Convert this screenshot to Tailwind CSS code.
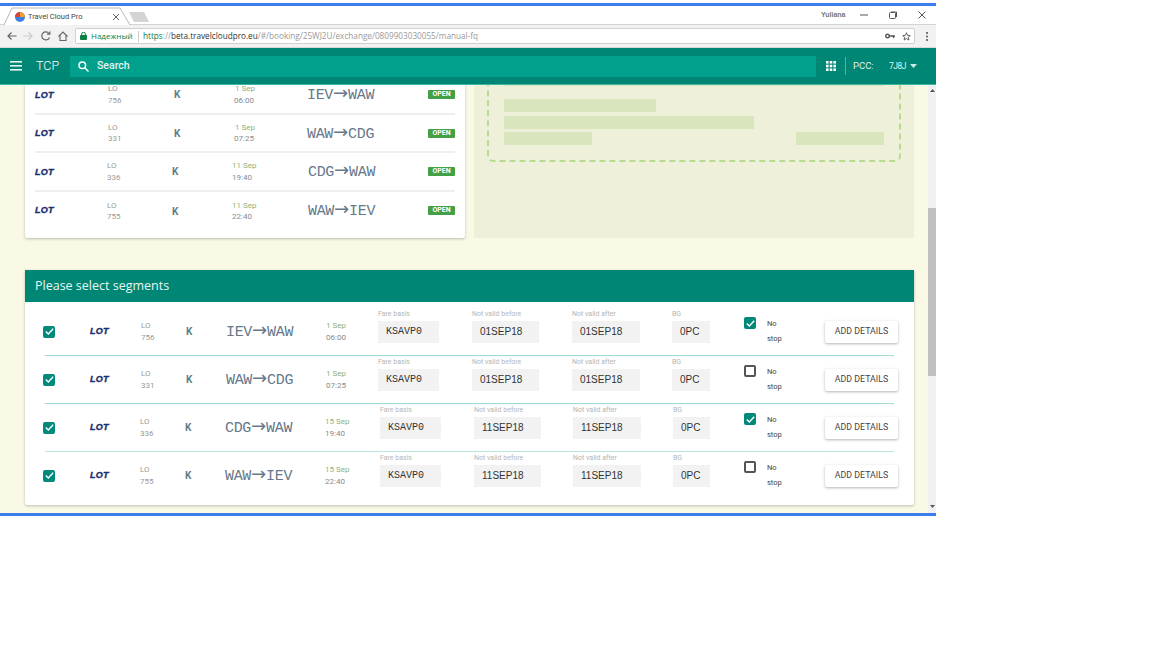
<!DOCTYPE html>
<html lang="en">
<head>
    <meta charset="UTF-8">
    <title>Travel Cloud Pro</title>
    <script src="https://cdn.jsdelivr.net/npm/@tailwindcss/browser@4"></script>
</head>
<body class="bg-white overflow-hidden font-['Roboto',sans-serif]">
<div class="w-[936px] h-[507px] mt-[3px] border-y-[3px] border-[#3b7de9] flex flex-col overflow-hidden box-content">

    <!-- browser tabs -->
    <div class="relative h-[19px] shrink-0 bg-white border-b border-[#d4d4d4] flex justify-end items-center pr-[10px] gap-[21px]">
        <svg class="absolute left-0 top-0" width="150" height="19" viewBox="0 0 150 19">
            <path d="M4 19 L12 2 H120 L130 19" fill="#fff" stroke="#b8b8b8"/>
            <path d="M129 6 H144 L149 16 H134 Z" fill="#d4d4d4"/>
            <circle cx="20" cy="11" r="5" fill="#3f7fe0"/>
            <path d="M20 6 A5 5 0 0 1 25 11 H20 Z" fill="#f0a030"/>
            <path d="M15 11 A5 5 0 0 1 20 6 V11 Z" fill="#d9453a"/>
            <path d="M113 8 L119 14 M119 8 L113 14" stroke="#666" stroke-width="1"/>
        </svg>
        <span class="absolute left-[28px] top-[5px] text-[7.5px] leading-[12px] text-[#444]">Travel Cloud Pro</span>
        <span class="text-[7px] font-bold text-[#777] w-[24px] -mr-[6px] font-['Liberation_Sans',sans-serif]">Yuliana</span>
        <svg width="8" height="8" viewBox="0 0 8 8"><path d="M0 4 H8" stroke="#555"/></svg>
        <svg width="8" height="8" viewBox="0 0 8 8" fill="none" stroke="#555"><rect x="0.5" y="1.5" width="6" height="6" rx="1"/><path d="M2 1 H7.5 V6"/></svg>
        <svg width="8" height="8" viewBox="0 0 8 8"><path d="M0.5 0.5 L7.5 7.5 M7.5 0.5 L0.5 7.5" stroke="#555"/></svg>
    </div>

    <!-- browser toolbar -->
    <div class="h-[23px] shrink-0 bg-[#f2f2f2] flex items-center pl-[7px] border-b border-[#d8d8d8]">
        <svg class="w-[10px] h-[10px] mr-[6px]" viewBox="0 0 10 10" fill="none" stroke="#666" stroke-width="1.2"><path d="M9.5 5 H1 M4.5 1.5 L1 5 L4.5 8.5"/></svg>
        <svg class="w-[10px] h-[10px] mr-[8px]" viewBox="0 0 10 10" fill="none" stroke="#ccc" stroke-width="1.2"><path d="M0.5 5 H9 M5.5 1.5 L9 5 L5.5 8.5"/></svg>
        <svg class="w-[10px] h-[10px] mr-[7px]" viewBox="0 0 10 10" fill="none" stroke="#666" stroke-width="1.2"><path d="M8.5 6.5 A4 4 0 1 1 8 2.5"/><path d="M8.8 0.5 V3.2 H6" /></svg>
        <svg class="w-[10px] h-[10px] mr-[7px]" viewBox="0 0 10 10" fill="none" stroke="#666" stroke-width="1.1"><path d="M0.5 5.5 L5 1 L9.5 5.5 M2 4.5 V9.5 H8 V4.5"/></svg>
        <div class="w-[840px] h-[16px] bg-white border border-[#d0d0d0] rounded-[2px] flex items-center pl-[4px] pr-[1px] leading-[14px] text-[8.2px] font-['Open_Sans',sans-serif] whitespace-nowrap">
            <svg class="w-[7px] h-[8px] mr-[4px] shrink-0" viewBox="0 0 7 8"><rect y="3" width="7" height="5" rx="1" fill="#0b8043"/><path d="M1.7 3.5 V2 A1.8 1.8 0 0 1 5.3 2 V3.5" fill="none" stroke="#0b8043"/></svg>
            <span class="text-[#0b8043] w-[47px] text-[8px]">Надежный</span>
            <span class="w-px h-[11px] bg-[#ccc] mr-[4px]"></span>
            <span class="text-[#0b8043]">https</span><span class="text-[#999]">://</span><span class="text-[#333]">beta.travelcloudpro.eu</span><span class="text-[#999]">/#/booking/25WJ2U/exchange/0809903030055/manual-fq</span>
            <svg class="w-[10px] h-[6px] ml-auto mr-[7px]" viewBox="0 0 10 6" fill="none" stroke="#555" stroke-width="1.4"><circle cx="2.5" cy="3" r="1.8"/><path d="M4.5 3 H10 M8.5 3 V5"/></svg>
            <svg class="w-[9px] h-[9px] mr-[2px]" viewBox="0 0 24 24" fill="none" stroke="#555" stroke-width="2.4"><path d="M12 2 L15 9 L22 9.5 L16.8 14.2 L18.5 21.5 L12 17.5 L5.5 21.5 L7.2 14.2 L2 9.5 L9 9 Z"/></svg>
        </div>
        <svg class="w-[3px] h-[9px] ml-[11px]" viewBox="0 0 3 9" fill="#777"><rect width="2" height="2"/><rect y="3.5" width="2" height="2"/><rect y="7" width="2" height="2"/></svg>
    </div>

    <!-- app nav -->
    <div class="relative z-10 h-[37px] shrink-0 bg-[#008675] border-b border-[#3fb5a3] flex items-center pl-[10px] text-white">
        <svg class="w-[12px] h-[10px] mr-[14px]" viewBox="0 0 12 10" fill="#e6f5f2"><rect width="12" height="1.6"/><rect y="4" width="12" height="1.6"/><rect y="8" width="12" height="1.6"/></svg>
        <span class="w-[34px] text-[12.5px] font-light">TCP</span>
        <div class="w-[746px] h-[21px] bg-[#00a08c] flex items-center pl-[8px]">
            <svg class="w-[11px] h-[11px] mr-[8px]" viewBox="0 0 11 11" fill="none" stroke="#fff" stroke-width="1.5"><circle cx="4.3" cy="4.3" r="3.3"/><path d="M6.8 6.8 L10.5 10.5"/></svg>
            <span class="text-[10.5px] font-medium text-[#e3f5f2]">Search</span>
        </div>
        <svg class="w-[10px] h-[10px] ml-[10px]" viewBox="0 0 10 10" fill="#fff"><rect width="2.6" height="2.6"/><rect x="3.7" width="2.6" height="2.6"/><rect x="7.4" width="2.6" height="2.6"/><rect y="3.7" width="2.6" height="2.6"/><rect x="3.7" y="3.7" width="2.6" height="2.6"/><rect x="7.4" y="3.7" width="2.6" height="2.6"/><rect y="7.4" width="2.6" height="2.6"/><rect x="3.7" y="7.4" width="2.6" height="2.6"/><rect x="7.4" y="7.4" width="2.6" height="2.6"/></svg>
        <span class="w-px h-[18px] bg-[#4fb5a7] ml-[9px] mr-[7px]"></span>
        <span class="w-[36px] text-[9.5px] text-[#dff3f0]">PCC:</span>
        <span class="w-[21px] text-[8.5px] tracking-[-0.5px] text-[#dff3f0]">7J8J</span>
        <svg class="w-[7px] h-[4px]" viewBox="0 0 7 4" fill="#cdeae6"><path d="M0 0 H7 L3.5 4 Z"/></svg>
    </div>

    <!-- scrolled page -->
    <div class="flex-1 min-h-0 bg-[#f9f9e6] flex overflow-hidden">
        <div class="w-[928px] shrink-0 -mt-[9px]">

            <div class="flex pl-[25px] gap-[9px]">
                <!-- ticket coupons -->
                <div class="w-[440px] h-[162px] bg-white shadow-[0_1px_3px_rgba(0,0,0,0.25)] px-[10px] rounded-b-[2px]">
                    <div class="h-[39px] flex items-center border-b-2 border-[#eeeeee]">
                        <span class="w-[73px] pt-[2px] text-[9px] font-black italic text-[#1d2f6f] font-['Liberation_Sans',sans-serif] tracking-[0.3px] [-webkit-text-stroke:0.4px_#1d2f6f]">LOT</span>
                        <span class="w-[66px] text-[8px] leading-[11.5px] text-[#9a9a9a]">LO<br>756</span>
                        <span class="w-[60px] text-[10px] font-bold text-[#607d8b]">K</span>
                        <span class="w-[73px] text-[8px] leading-[11.5px] text-[#8a8a8a]"><span class="block w-[19px] whitespace-nowrap text-[#8fb07a] pl-[1px]">1 Sep</span>06:00</span>
                        <span class="w-[121px] pt-[3px] text-[15px] leading-[20px] tracking-[-0.33px] text-[#66788a] font-['Liberation_Mono',monospace]">IEV<span class="font-['DejaVu_Sans',sans-serif] text-[18px] leading-[0] tracking-normal">→</span>WAW</span>
                        <span class="w-[27px] h-[9px] rounded-[1px] bg-[#43a047] text-white text-[7px] font-bold leading-[9px] text-center">OPEN</span>
                    </div>
                    <div class="h-[38px] flex items-center border-b-2 border-[#eeeeee]">
                        <span class="w-[73px] pt-[2px] text-[9px] font-black italic text-[#1d2f6f] font-['Liberation_Sans',sans-serif] tracking-[0.3px] [-webkit-text-stroke:0.4px_#1d2f6f]">LOT</span>
                        <span class="w-[66px] text-[8px] leading-[11.5px] text-[#9a9a9a]">LO<br>331</span>
                        <span class="w-[60px] text-[10px] font-bold text-[#607d8b]">K</span>
                        <span class="w-[73px] text-[8px] leading-[11.5px] text-[#8a8a8a]"><span class="block w-[19px] whitespace-nowrap text-[#8fb07a] pl-[1px]">1 Sep</span>07:25</span>
                        <span class="w-[121px] pt-[3px] text-[15px] leading-[20px] tracking-[-0.33px] text-[#66788a] font-['Liberation_Mono',monospace]">WAW<span class="font-['DejaVu_Sans',sans-serif] text-[18px] leading-[0] tracking-normal">→</span>CDG</span>
                        <span class="w-[27px] h-[9px] rounded-[1px] bg-[#43a047] text-white text-[7px] font-bold leading-[9px] text-center">OPEN</span>
                    </div>
                    <div class="h-[39px] flex items-center border-b-2 border-[#eeeeee]">
                        <span class="w-[72px] pt-[2px] text-[9px] font-black italic text-[#1d2f6f] font-['Liberation_Sans',sans-serif] tracking-[0.3px] [-webkit-text-stroke:0.4px_#1d2f6f]">LOT</span>
                        <span class="w-[65px] text-[8px] leading-[11.5px] text-[#9a9a9a]">LO<br>336</span>
                        <span class="w-[60px] text-[10px] font-bold text-[#607d8b]">K</span>
                        <span class="w-[76px] text-[8px] leading-[11.5px] text-[#8a8a8a]"><span class="block text-[#8fb07a]">11 Sep</span>19:40</span>
                        <span class="w-[120px] pt-[3px] text-[15px] leading-[20px] tracking-[-0.33px] text-[#66788a] font-['Liberation_Mono',monospace]">CDG<span class="font-['DejaVu_Sans',sans-serif] text-[18px] leading-[0] tracking-normal">→</span>WAW</span>
                        <span class="w-[27px] h-[9px] rounded-[1px] bg-[#43a047] text-white text-[7px] font-bold leading-[9px] text-center">OPEN</span>
                    </div>
                    <div class="h-[38px] flex items-center">
                        <span class="w-[72px] text-[9px] font-black italic text-[#1d2f6f] font-['Liberation_Sans',sans-serif] tracking-[0.3px] [-webkit-text-stroke:0.4px_#1d2f6f]">LOT</span>
                        <span class="w-[65px] text-[8px] leading-[11.5px] text-[#9a9a9a]">LO<br>755</span>
                        <span class="w-[60px] text-[10px] font-bold text-[#607d8b]">K</span>
                        <span class="w-[76px] text-[8px] leading-[11.5px] text-[#8a8a8a]"><span class="block text-[#8fb07a]">11 Sep</span>22:40</span>
                        <span class="w-[120px] pt-[1px] text-[15px] leading-[20px] tracking-[-0.33px] text-[#66788a] font-['Liberation_Mono',monospace]">WAW<span class="font-['DejaVu_Sans',sans-serif] text-[18px] leading-[0] tracking-normal">→</span>IEV</span>
                        <span class="w-[27px] h-[9px] -mt-[2px] rounded-[1px] bg-[#43a047] text-white text-[7px] font-bold leading-[9px] text-center">OPEN</span>
                    </div>
                </div>

                <!-- placeholder panel -->
                <div class="w-[440px] h-[162px] bg-[#eef0da] px-[13px]">
                    <div class="h-[86px] border-2 border-t-0 border-dashed border-[#b7dc90] rounded-b-[6px] px-[15px] flex flex-col">
                        <div class="h-[11px] bg-[#d9e6bd] -mt-[1px]"></div>
                        <div class="w-[152px] h-[13px] bg-[#d9e6bd] mt-[13px]"></div>
                        <div class="w-[250px] h-[13px] bg-[#d9e6bd] mt-[4px]"></div>
                        <div class="flex justify-between mt-[3px]">
                            <div class="w-[88px] h-[13px] bg-[#d9e6bd]"></div>
                            <div class="w-[88px] h-[13px] bg-[#d9e6bd]"></div>
                        </div>
                    </div>
                </div>
            </div>

            <!-- segments -->
            <div class="w-[889px] ml-[25px] mt-[32px] bg-white shadow-[0_1px_3px_rgba(0,0,0,0.25)] pb-[6px] rounded-b-[2px]">
                <div class="h-[32px] bg-[#008675] flex items-center pl-[10px] pt-[1px] text-[12.5px] text-[#e8f6f3] font-['Open_Sans',sans-serif]">Please select segments</div>
                <div class="h-[6px]"></div>

                <div class="h-[47px] flex items-center pl-[18px]">
                    <span class="w-[47px] flex"><span class="w-[12px] h-[12px] rounded-[2px] bg-[#00897b] flex items-center justify-center"><svg class="w-[9px] h-[7px]" viewBox="0 0 9 7" fill="none" stroke="#fff" stroke-width="1.4"><path d="M0.8 3.5 L3.3 6 L8.2 0.8"/></svg></span></span>
                    <span class="w-[51px] text-[9px] font-black italic text-[#1d2f6f] font-['Liberation_Sans',sans-serif] tracking-[0.3px] [-webkit-text-stroke:0.4px_#1d2f6f]">LOT</span>
                    <span class="w-[45px] text-[8px] leading-[11.5px] text-[#9a9a9a]">LO<br>756</span>
                    <span class="w-[40px] text-[10px] font-bold text-[#607d8b]">K</span>
                    <span class="w-[100px] pt-[2px] text-[15px] leading-[20px] tracking-[-0.33px] text-[#66788a] font-['Liberation_Mono',monospace]">IEV<span class="font-['DejaVu_Sans',sans-serif] text-[18px] leading-[0] tracking-normal">→</span>WAW</span>
                    <span class="w-[52px] text-[8px] leading-[11.5px] text-[#8a8a8a]"><span class="block text-[#8fb07a]">1 Sep</span>06:00</span>
                    <div class="w-[94px] -mt-[11px]"><p class="h-[11px] text-[7px] leading-[9px] text-[#b5b5b5]">Fare basis</p><p class="w-[61px] h-[22px] bg-[#f2f2f2] pl-[8px] text-[10px] leading-[22px] text-[#333] font-['Liberation_Mono',monospace]">KSAVP0</p></div>
                    <div class="w-[100px] -mt-[11px]"><p class="h-[11px] text-[7px] leading-[9px] text-[#b5b5b5]">Not valid before</p><p class="w-[67px] h-[22px] bg-[#f2f2f2] pl-[8px] text-[10px] leading-[22px] text-[#333] font-['Liberation_Sans',sans-serif]">01SEP18</p></div>
                    <div class="w-[100px] -mt-[11px]"><p class="h-[11px] text-[7px] leading-[9px] text-[#b5b5b5]">Not valid after</p><p class="w-[68px] h-[22px] bg-[#f2f2f2] pl-[8px] text-[10px] leading-[22px] text-[#333] font-['Liberation_Sans',sans-serif]">01SEP18</p></div>
                    <div class="w-[72px] -mt-[11px]"><p class="h-[11px] text-[7px] leading-[9px] text-[#b5b5b5]">BG</p><p class="w-[38px] h-[22px] bg-[#f2f2f2] pl-[8px] text-[10px] leading-[22px] text-[#333] font-['Liberation_Sans',sans-serif]">0PC</p></div>
                    <div class="w-[81px] flex items-start">
                        <span class="w-[12px] h-[12px] rounded-[2px] bg-[#00897b] flex items-center justify-center mr-[11px]"><svg class="w-[9px] h-[7px]" viewBox="0 0 9 7" fill="none" stroke="#fff" stroke-width="1.4"><path d="M0.8 3.5 L3.3 6 L8.2 0.8"/></svg></span>
                        <span class="text-[7.5px] leading-[15px] text-[#444] -mt-[1px]">No<br>stop</span>
                    </div>
                    <button class="w-[73px] h-[22px] bg-white rounded-[2px] shadow-[0_1px_3px_rgba(0,0,0,0.3)] text-[8.8px] text-[#444]">ADD DETAILS</button>
                </div>
                <div class="h-px mx-[20px] bg-[#a3dcd5]"></div>

                <div class="h-[47px] flex items-center pl-[18px]">
                    <span class="w-[47px] flex"><span class="w-[12px] h-[12px] rounded-[2px] bg-[#00897b] flex items-center justify-center"><svg class="w-[9px] h-[7px]" viewBox="0 0 9 7" fill="none" stroke="#fff" stroke-width="1.4"><path d="M0.8 3.5 L3.3 6 L8.2 0.8"/></svg></span></span>
                    <span class="w-[51px] text-[9px] font-black italic text-[#1d2f6f] font-['Liberation_Sans',sans-serif] tracking-[0.3px] [-webkit-text-stroke:0.4px_#1d2f6f]">LOT</span>
                    <span class="w-[45px] text-[8px] leading-[11.5px] text-[#9a9a9a]">LO<br>331</span>
                    <span class="w-[40px] text-[10px] font-bold text-[#607d8b]">K</span>
                    <span class="w-[100px] pt-[2px] text-[15px] leading-[20px] tracking-[-0.33px] text-[#66788a] font-['Liberation_Mono',monospace]">WAW<span class="font-['DejaVu_Sans',sans-serif] text-[18px] leading-[0] tracking-normal">→</span>CDG</span>
                    <span class="w-[52px] text-[8px] leading-[11.5px] text-[#8a8a8a]"><span class="block text-[#8fb07a]">1 Sep</span>07:25</span>
                    <div class="w-[94px] -mt-[11px]"><p class="h-[11px] text-[7px] leading-[9px] text-[#b5b5b5]">Fare basis</p><p class="w-[61px] h-[22px] bg-[#f2f2f2] pl-[8px] text-[10px] leading-[22px] text-[#333] font-['Liberation_Mono',monospace]">KSAVP0</p></div>
                    <div class="w-[100px] -mt-[11px]"><p class="h-[11px] text-[7px] leading-[9px] text-[#b5b5b5]">Not valid before</p><p class="w-[67px] h-[22px] bg-[#f2f2f2] pl-[8px] text-[10px] leading-[22px] text-[#333] font-['Liberation_Sans',sans-serif]">01SEP18</p></div>
                    <div class="w-[100px] -mt-[11px]"><p class="h-[11px] text-[7px] leading-[9px] text-[#b5b5b5]">Not valid after</p><p class="w-[68px] h-[22px] bg-[#f2f2f2] pl-[8px] text-[10px] leading-[22px] text-[#333] font-['Liberation_Sans',sans-serif]">01SEP18</p></div>
                    <div class="w-[72px] -mt-[11px]"><p class="h-[11px] text-[7px] leading-[9px] text-[#b5b5b5]">BG</p><p class="w-[38px] h-[22px] bg-[#f2f2f2] pl-[8px] text-[10px] leading-[22px] text-[#333] font-['Liberation_Sans',sans-serif]">0PC</p></div>
                    <div class="w-[81px] flex items-start">
                        <span class="w-[12px] h-[12px] rounded-[2px] border-2 border-[#555] mr-[11px]"></span>
                        <span class="text-[7.5px] leading-[15px] text-[#444] -mt-[1px]">No<br>stop</span>
                    </div>
                    <button class="w-[73px] h-[22px] bg-white rounded-[2px] shadow-[0_1px_3px_rgba(0,0,0,0.3)] text-[8.8px] text-[#444]">ADD DETAILS</button>
                </div>
                <div class="h-px mx-[20px] bg-[#a3dcd5]"></div>

                <div class="h-[47px] flex items-center pl-[18px]">
                    <span class="w-[47px] flex"><span class="w-[12px] h-[12px] rounded-[2px] bg-[#00897b] flex items-center justify-center"><svg class="w-[9px] h-[7px]" viewBox="0 0 9 7" fill="none" stroke="#fff" stroke-width="1.4"><path d="M0.8 3.5 L3.3 6 L8.2 0.8"/></svg></span></span>
                    <span class="w-[50px] text-[9px] font-black italic text-[#1d2f6f] font-['Liberation_Sans',sans-serif] tracking-[0.3px] [-webkit-text-stroke:0.4px_#1d2f6f]">LOT</span>
                    <span class="w-[45px] text-[8px] leading-[11.5px] text-[#9a9a9a]">LO<br>336</span>
                    <span class="w-[40px] text-[10px] font-bold text-[#607d8b]">K</span>
                    <span class="w-[100px] pt-[2px] text-[15px] leading-[20px] tracking-[-0.33px] text-[#66788a] font-['Liberation_Mono',monospace]">CDG<span class="font-['DejaVu_Sans',sans-serif] text-[18px] leading-[0] tracking-normal">→</span>WAW</span>
                    <span class="w-[55px] text-[8px] leading-[11.5px] text-[#8a8a8a]"><span class="block text-[#8fb07a]">15 Sep</span>19:40</span>
                    <div class="w-[94px] -mt-[11px]"><p class="h-[11px] text-[7px] leading-[9px] text-[#b5b5b5]">Fare basis</p><p class="w-[61px] h-[22px] bg-[#f2f2f2] pl-[8px] text-[10px] leading-[22px] text-[#333] font-['Liberation_Mono',monospace]">KSAVP0</p></div>
                    <div class="w-[99px] -mt-[11px]"><p class="h-[11px] text-[7px] leading-[9px] text-[#b5b5b5]">Not valid before</p><p class="w-[67px] h-[22px] bg-[#f2f2f2] pl-[8px] text-[10px] leading-[22px] text-[#333] font-['Liberation_Sans',sans-serif]">11SEP18</p></div>
                    <div class="w-[100px] -mt-[11px]"><p class="h-[11px] text-[7px] leading-[9px] text-[#b5b5b5]">Not valid after</p><p class="w-[68px] h-[22px] bg-[#f2f2f2] pl-[8px] text-[10px] leading-[22px] text-[#333] font-['Liberation_Sans',sans-serif]">11SEP18</p></div>
                    <div class="w-[71px] -mt-[11px]"><p class="h-[11px] text-[7px] leading-[9px] text-[#b5b5b5]">BG</p><p class="w-[37px] h-[22px] bg-[#f2f2f2] pl-[8px] text-[10px] leading-[22px] text-[#333] font-['Liberation_Sans',sans-serif]">0PC</p></div>
                    <div class="w-[81px] flex items-start">
                        <span class="w-[12px] h-[12px] rounded-[2px] bg-[#00897b] flex items-center justify-center mr-[11px]"><svg class="w-[9px] h-[7px]" viewBox="0 0 9 7" fill="none" stroke="#fff" stroke-width="1.4"><path d="M0.8 3.5 L3.3 6 L8.2 0.8"/></svg></span>
                        <span class="text-[7.5px] leading-[15px] text-[#444] -mt-[1px]">No<br>stop</span>
                    </div>
                    <button class="w-[73px] h-[22px] bg-white rounded-[2px] shadow-[0_1px_3px_rgba(0,0,0,0.3)] text-[8.8px] text-[#444]">ADD DETAILS</button>
                </div>
                <div class="h-px mx-[20px] bg-[#b9e3dc]"></div>

                <div class="h-[47px] flex items-center pl-[18px]">
                    <span class="w-[47px] flex"><span class="w-[12px] h-[12px] rounded-[2px] bg-[#00897b] flex items-center justify-center"><svg class="w-[9px] h-[7px]" viewBox="0 0 9 7" fill="none" stroke="#fff" stroke-width="1.4"><path d="M0.8 3.5 L3.3 6 L8.2 0.8"/></svg></span></span>
                    <span class="w-[50px] text-[9px] font-black italic text-[#1d2f6f] font-['Liberation_Sans',sans-serif] tracking-[0.3px] [-webkit-text-stroke:0.4px_#1d2f6f]">LOT</span>
                    <span class="w-[45px] text-[8px] leading-[11.5px] text-[#9a9a9a]">LO<br>755</span>
                    <span class="w-[40px] text-[10px] font-bold text-[#607d8b]">K</span>
                    <span class="w-[100px] pt-[2px] text-[15px] leading-[20px] tracking-[-0.33px] text-[#66788a] font-['Liberation_Mono',monospace]">WAW<span class="font-['DejaVu_Sans',sans-serif] text-[18px] leading-[0] tracking-normal">→</span>IEV</span>
                    <span class="w-[55px] text-[8px] leading-[11.5px] text-[#8a8a8a]"><span class="block text-[#8fb07a]">15 Sep</span>22:40</span>
                    <div class="w-[94px] -mt-[11px]"><p class="h-[11px] text-[7px] leading-[9px] text-[#b5b5b5]">Fare basis</p><p class="w-[61px] h-[22px] bg-[#f2f2f2] pl-[8px] text-[10px] leading-[22px] text-[#333] font-['Liberation_Mono',monospace]">KSAVP0</p></div>
                    <div class="w-[99px] -mt-[11px]"><p class="h-[11px] text-[7px] leading-[9px] text-[#b5b5b5]">Not valid before</p><p class="w-[67px] h-[22px] bg-[#f2f2f2] pl-[8px] text-[10px] leading-[22px] text-[#333] font-['Liberation_Sans',sans-serif]">11SEP18</p></div>
                    <div class="w-[100px] -mt-[11px]"><p class="h-[11px] text-[7px] leading-[9px] text-[#b5b5b5]">Not valid after</p><p class="w-[68px] h-[22px] bg-[#f2f2f2] pl-[8px] text-[10px] leading-[22px] text-[#333] font-['Liberation_Sans',sans-serif]">11SEP18</p></div>
                    <div class="w-[71px] -mt-[11px]"><p class="h-[11px] text-[7px] leading-[9px] text-[#b5b5b5]">BG</p><p class="w-[37px] h-[22px] bg-[#f2f2f2] pl-[8px] text-[10px] leading-[22px] text-[#333] font-['Liberation_Sans',sans-serif]">0PC</p></div>
                    <div class="w-[81px] flex items-start">
                        <span class="w-[12px] h-[12px] rounded-[2px] border-2 border-[#555] mr-[11px]"></span>
                        <span class="text-[7.5px] leading-[15px] text-[#444] -mt-[1px]">No<br>stop</span>
                    </div>
                    <button class="w-[73px] h-[22px] bg-white rounded-[2px] shadow-[0_1px_3px_rgba(0,0,0,0.3)] text-[8.8px] text-[#444]">ADD DETAILS</button>
                </div>
            </div>
        </div>

        <!-- scrollbar -->
        <div class="w-[8px] shrink-0 bg-[#f1f1f1] flex flex-col items-center">
            <svg class="w-[5px] h-[3px] mt-[4px]" viewBox="0 0 5 3" fill="#555"><path d="M0 3 L2.5 0 L5 3 Z"/></svg>
            <div class="w-full h-[168px] bg-[#c0c0c0] mt-[116px]"></div>
            <svg class="w-[5px] h-[3px] mt-auto mb-[5px]" viewBox="0 0 5 3" fill="#555"><path d="M0 0 L2.5 3 L5 0 Z"/></svg>
        </div>
    </div>
</div>
</body>
</html>
